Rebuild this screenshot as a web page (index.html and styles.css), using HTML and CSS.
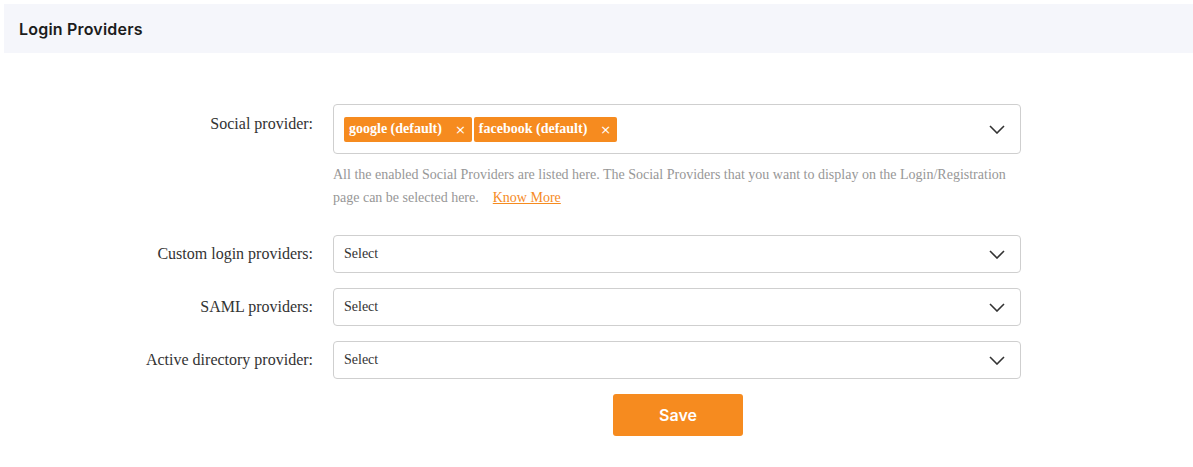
FILE: index.html
```html
<!DOCTYPE html>
<html>
<head>
<meta charset="utf-8">
<link rel="stylesheet" href="styles.css">
</head>
<body>
<div class="page">
  <div class="header"><h1 class="title">Login Providers</h1></div>
  <div class="form">
    <div class="row row-top">
      <label class="label">Social provider:</label>
      <div class="control">
        <div class="select multi">
          <div class="chips">
            <span class="chip">google (default)<span class="chip-x">×</span></span>
            <span class="chip">facebook (default)<span class="chip-x">×</span></span>
          </div>
          <svg class="chev" width="16" height="9" viewBox="0 0 16 9"><path d="M1 1 L8 8 L15 1" fill="none" stroke="#333" stroke-width="1.6"/></svg>
        </div>
        <p class="help">All the enabled Social Providers are listed here. The Social Providers that you want to display on the Login/Registration page can be selected here.<a class="more" href="#">Know More</a></p>
      </div>
    </div>
    <div class="row">
      <label class="label">Custom login providers:</label>
      <div class="control">
        <div class="select"><span class="placeholder">Select</span>
          <svg class="chev" width="16" height="9" viewBox="0 0 16 9"><path d="M1 1 L8 8 L15 1" fill="none" stroke="#333" stroke-width="1.6"/></svg>
        </div>
      </div>
    </div>
    <div class="row">
      <label class="label">SAML providers:</label>
      <div class="control">
        <div class="select"><span class="placeholder">Select</span>
          <svg class="chev" width="16" height="9" viewBox="0 0 16 9"><path d="M1 1 L8 8 L15 1" fill="none" stroke="#333" stroke-width="1.6"/></svg>
        </div>
      </div>
    </div>
    <div class="row">
      <label class="label">Active directory provider:</label>
      <div class="control">
        <div class="select"><span class="placeholder">Select</span>
          <svg class="chev" width="16" height="9" viewBox="0 0 16 9"><path d="M1 1 L8 8 L15 1" fill="none" stroke="#333" stroke-width="1.6"/></svg>
        </div>
      </div>
    </div>
    <div class="row">
      <div class="label"></div>
      <div class="control actions"><button class="save">Save</button></div>
    </div>
  </div>
</div>
</body>
</html>
```

FILE: styles.css
```css
html, body {
  margin: 0;
  padding: 0;
  background: #fff;
}
.page {
  padding: 4px 0 0 4px;
  font-family: "Liberation Serif", "Times New Roman", serif;
  color: #333;
}
.header {
  background: #f5f6fb;
  height: 49px;
  display: flex;
  align-items: center;
  padding-left: 15px;
}
.title {
  margin: 0;
  font-family: Inter, "Open Sans", sans-serif;
  font-weight: 600;
  font-size: 16px;
  color: #1c1c1c;
  letter-spacing: 0.2px;
}
.form {
  display: flex;
  flex-direction: column;
  gap: 15px;
  padding-top: 51px;
}
.row {
  display: grid;
  grid-template-columns: 309px 688px;
  column-gap: 20px;
  align-items: center;
}
.row-top {
  align-items: start;
  margin-bottom: 11px;
}
.label {
  text-align: right;
  font-size: 16px;
  line-height: 20px;
  color: #333;
}
.row-top .label {
  padding-top: 10px;
}
.select {
  box-sizing: border-box;
  height: 38px;
  border: 1px solid #cfcfcf;
  border-radius: 4px;
  display: flex;
  align-items: center;
  padding: 0 15px 0 10px;
  justify-content: space-between;
}
.select.multi {
  height: 50px;
}
.placeholder {
  font-size: 14px;
  color: #333;
}
.chips {
  display: flex;
  gap: 2px;
}
.chip {
  display: inline-flex;
  align-items: center;
  height: 25px;
  background: #f68b1f;
  border-radius: 2px;
  color: #fff;
  font-weight: bold;
  font-size: 14px;
  padding: 0 6px 0 5px;
}
.chip-x {
  font-weight: normal;
  font-family: "DejaVu Sans", sans-serif;
  font-size: 13px;
  margin-left: 13px;
}
.chev {
  display: block;
}
.help {
  margin: 9px 0 0 0;
  font-size: 14px;
  line-height: 23px;
  color: #979797;
}
.more {
  display: inline-block;
  color: #f68b1f;
  margin-left: 14px;
}
.actions {
  display: flex;
  justify-content: center;
  padding-left: 2px;
}
.save {
  width: 130px;
  height: 42px;
  background: #f68b1f;
  border: none;
  border-radius: 3px;
  color: #fff;
  font-family: Inter, "Open Sans", sans-serif;
  font-weight: 600;
  font-size: 16px;
}
```
